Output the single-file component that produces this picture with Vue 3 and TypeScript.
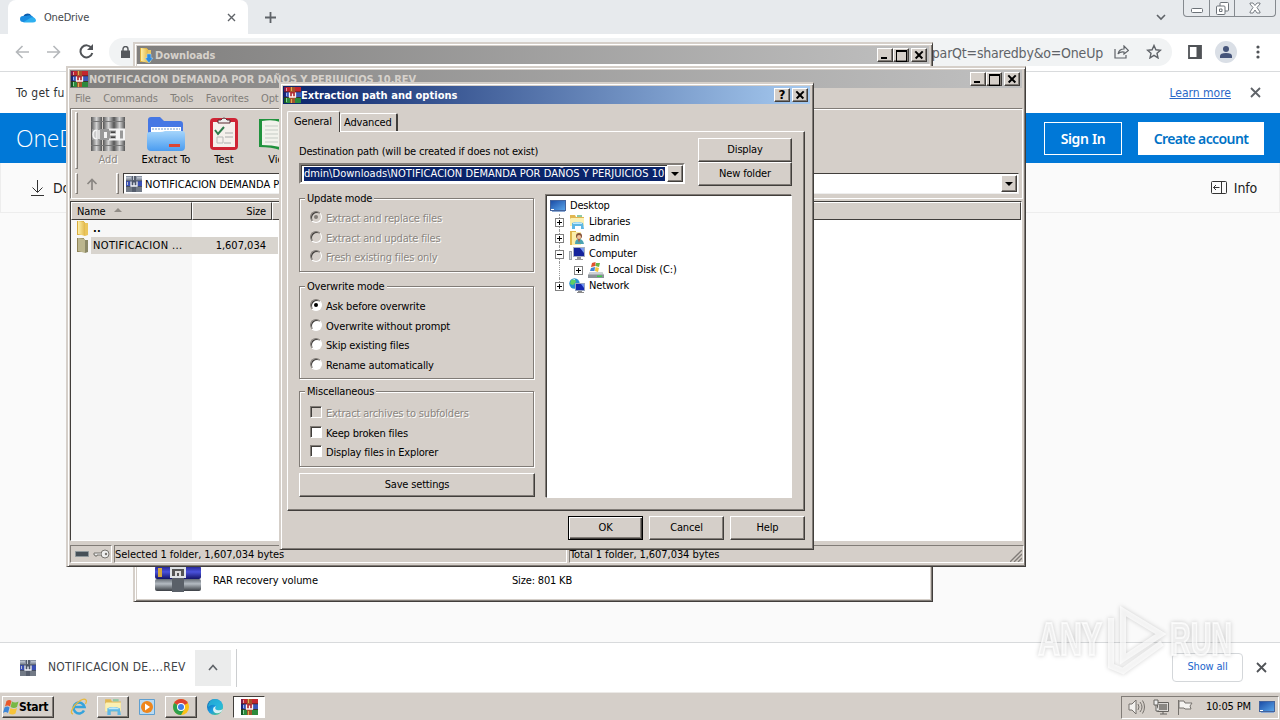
<template>
  <div class="screen">
    <svg class="defs" width="0" height="0">
      <defs>
        <linearGradient id="folder-y" x1="0" x2="1"><stop offset="0" stop-color="#fdf0a8" /><stop offset="1" stop-color="#e2b74a" /></linearGradient>
        <linearGradient id="folder-b" x1="0" y1="0" x2="0" y2="1"><stop offset="0" stop-color="#a5d5fb" /><stop offset="1" stop-color="#4a9cf0" /></linearGradient>
        <linearGradient id="monitor" x1="0" y1="0" x2="1" y2="1"><stop offset="0" stop-color="#1c4fa8" /><stop offset="1" stop-color="#58a3e8" /></linearGradient>
        <linearGradient id="edge" x1="0" y1="0" x2="1" y2="1"><stop offset="0" stop-color="#0c59a4" /><stop offset=".5" stop-color="#1b9de2" /><stop offset="1" stop-color="#58d36b" /></linearGradient>
        <linearGradient id="pipe" x1="0" x2="1"><stop offset="0" stop-color="#555" /><stop offset=".5" stop-color="#d2d2d2" /><stop offset="1" stop-color="#555" /></linearGradient>
        <linearGradient id="roll-blue" x1="0" y1="0" x2="0" y2="1"><stop offset="0" stop-color="#22228c" /><stop offset=".45" stop-color="#4a52dc" /><stop offset="1" stop-color="#141466" /></linearGradient>
        <linearGradient id="roll-gray" x1="0" y1="0" x2="0" y2="1"><stop offset="0" stop-color="#666d75" /><stop offset=".4" stop-color="#b4bbc2" /><stop offset="1" stop-color="#3a3e44" /></linearGradient>
      </defs>
      <symbol id="i-rar" viewBox="0 0 17 16" preserveAspectRatio="none">
        <path fill="#c4262e" d="M0 0h17v5H0z" /><path fill="#3a56b8" d="M0 5h17v5H0z" /><path fill="#2c8a3c" d="M0 10h17v6H0z" />
        <path fill="#7c1a4c" d="M0 0h2v5H0z" /><path fill="#18247c" d="M0 5h2v5H0z" /><path fill="#145424" d="M0 10h2v6H0z" />
        <path fill="#e4a0a0" d="M2 1h1v3H2z" /><path fill="#9cb4ee" d="M2 6h1v3H2z" /><path fill="#8cd49a" d="M2 11h1v4H2z" />
        <path fill="#3a2020" d="M0 4.500h17v.8H0zM0 10h17v.8H0z" />
        <path fill="#a5532c" d="M6 0h5v16H6z" /><path fill="#e0b050" d="M7 0h1v4H7zM7 12h1v4H7z" />
        <path fill="#b02a34" d="M5 5h7v6H5z" /><path fill="none" stroke="#fbf4f0" stroke-width="1.300" d="M5.500 5.500V10h6V5.500M8.500 6.500V10" />
      </symbol>
      <symbol id="i-rev" viewBox="0 0 16 16">
        <path fill="#8a93a3" d="M0 0h16v5H0z" /><path fill="#3b50b4" d="M0 5h16v5H0z" /><path fill="#727a86" d="M0 10h16v6H0z" />
        <path fill="#3b4254" d="M0 4.500h16v.8H0zM0 10h16v.8H0z" /><path fill="#b8c0cc" d="M0 1h5v1.500H0zM11 1h5v1.500h-5zM1 6h1v3H1z" />
        <path fill="#555d6c" d="M6 0h4v16H6z" /><path fill="#c6ccd6" d="M7 0h1v4H7z" />
        <path fill="#4a5468" d="M4.500 5h7v6h-7z" /><path fill="none" stroke="#f3f5fa" stroke-width="1.300" d="M5 5.500V10h6V5.500M8 6.500V10" />
      </symbol>
      <symbol id="i-folder" viewBox="0 0 16 16">
        <path fill="#d8ac3e" d="M2 1h7v14H2z" /><path fill="url(#folder-y)" d="M3 1l7 1v14l-7-2z" /><path fill="#ebc65c" d="M10 3h3v12l-3 1z" />
      </symbol>
      <symbol id="i-folder-sel" viewBox="0 0 16 16">
        <path fill="#8f8356" d="M2 1h7v14H2z" /><path fill="#bcb68e" d="M3 1l7 1v14l-7-2z" /><path fill="#8c8968" d="M10 3h3v12l-3 1z" />
      </symbol>
      <symbol id="i-explorer" viewBox="0 0 16 16">
        <path fill="#e1b751" d="M1 1h5l1 2h8v9H1z" /><path fill="#fbf0b3" d="M2 4h13v8H1V5z" /><path fill="#8fc9a4" d="M8 1h5v2H8z" />
        <path fill="#5fb7e4" d="M3 9q5-2 11 0l1 6h-3v-3H6v3H3z" /><path fill="#c0e9fa" d="M4 9q4-1.500 9 0v1H4z" />
      </symbol>
      <symbol id="i-desktop" viewBox="0 0 16 16">
        <path fill="#43639c" d="M0 2h16v11H0z" /><path fill="url(#monitor)" d="M1 3h14v9H1z" /><path fill="#fff" d="M1 11h3v1H1z" /><path fill="#8ba9d4" d="M2 13h13v1H2z" />
      </symbol>
      <symbol id="i-user" viewBox="0 0 16 16">
        <path fill="#dfb54c" d="M1 1h6v14H1z" /><path fill="#fbedaa" d="M3 2h9v13H3z" /><circle cx="10" cy="6" r="3" fill="#855239" /><circle cx="10" cy="7" r="2" fill="#efc29b" />
        <path fill="#4ba3b2" d="M6 14q0-5 4-5t5 5z" /><path fill="#bd533a" d="M9 9h2l-1 4z" />
      </symbol>
      <symbol id="i-computer" viewBox="0 0 16 16">
        <path fill="#9ea5aa" d="M0 5h3v9H0z" /><path fill="#d7dde1" d="M1 6h1v7H1z" /><path fill="#a9b1c2" d="M4 1h12v10H4z" /><path fill="#15249c" d="M5 2h10v8H5z" />
        <path fill="#7b9df0" d="M11 2h4v5z" /><path fill="#9a9a9a" d="M8 11h4v2h2v1H6v-1h2z" />
      </symbol>
      <symbol id="i-disk" viewBox="0 0 16 16">
        <path fill="#8c9298" d="M2 10h12l2 3v3H0v-3z" /><path fill="#cdd2d6" d="M2 10h12l1.500 2.500H.5z" /><path fill="#3ecb4c" d="M9 13.500h5V15H9z" />
        <path fill="#e2512d" d="M4 1l3.500-1v4L3 5z" /><path fill="#69b546" d="M8 1l4 0-1 4-3.500-1z" /><path fill="#4284d3" d="M3 6l4-1-.5 4L2 9z" /><path fill="#f5c53b" d="M7.500 5l3.500 1-1 4-3-1z" />
      </symbol>
      <symbol id="i-network" viewBox="0 0 16 16">
        <circle cx="5.500" cy="5.500" r="5.200" fill="#268fd0" /><path fill="#5fce64" d="M2 2l4-1 1 3-3 3-3-1zM6 7l3 1-2 3z" /><path fill="#c7ecff" d="M3 2l3-1v1z" />
        <path fill="#97a3c0" d="M6 5h10v8H6z" /><path fill="#1426b0" d="M7 6h8v6H7z" /><path fill="#6e92f2" d="M12 6h3v4z" /><path fill="#8b8b8b" d="M9 13h4v1h2v1H8v-1h1z" />
      </symbol>
      <symbol id="i-flag" viewBox="0 0 16 16">
        <path fill="#e8582b" d="M3.500 2q3-2 5 0L7 7.500Q4.500 5.500 2 7.500z" /><path fill="#78b845" d="M9 2.500q3 2 6.500 0l-1.500 5.500q-3 2-6.500 0z" />
        <path fill="#3d87d8" d="M1.500 8.500q3-2 5 0L5 14q-2.500-2-5 0z" /><path fill="#f6c33a" d="M7.500 9q3 2 6.500 0l-1.500 5.500q-3 2-6.500 0z" />
      </symbol>
    </svg>

    <!-- Browser -->
    <div class="tabstrip">
      <div class="tab">
        <svg class="cloud" width="16" height="11" viewBox="0 0 16 11"><path fill="#0b5cad" d="M3 6a4.500 4.500 0 0 1 8.500-2L9 8H3z" /><path fill="#1a8ce0" d="M6 4q6-2 8 2l-4 4H3a3 3 0 0 1 0-6z" /><path fill="#2eb0f0" d="M3 10.500L11 5.500q4-1 5 2.500 0 2.500-3 2.500z" /></svg>
        <span>OneDrive</span>
        <svg class="tab-x" width="9" height="9" viewBox="0 0 9 9"><path d="M1 1l7 7M8 1L1 8" stroke="#5f6368" stroke-width="1.400" /></svg>
      </div>
      <svg class="new-tab" width="13" height="13" viewBox="0 0 13 13"><path d="M6.500 1v11M1 6.500h11" stroke="#5f6368" stroke-width="1.800" /></svg>
      <svg class="chev" width="10" height="7" viewBox="0 0 10 7"><path d="M1 1l4 4 4-4" fill="none" stroke="#5f6368" stroke-width="1.600" /></svg>
      <div class="caption">
        <span><svg width="12" height="5" viewBox="0 0 12 5"><rect x=".5" y=".5" width="11" height="4" rx="1" fill="#fff" stroke="#6c7278" /></svg></span>
        <span><svg width="13" height="13" viewBox="0 0 13 13" fill="#fff" stroke="#6c7278"><rect x="4" y=".5" width="8.500" height="8.500" rx="1" /><rect x=".5" y="4" width="8.500" height="8.500" rx="1" /><path d="M3.500 7h2.500v2.500H3.500z" /></svg></span>
        <span><svg width="12" height="12" viewBox="0 0 12 12"><path d="M1 1h3l2 2.500L8 1h3v1L8 5.500 11 10v1H8L6 8l-2 3H1v-1l3-4.500L1 2z" fill="#fff" stroke="#6c7278" stroke-width=".9" /></svg></span>
      </div>
    </div>
    <div class="toolbar">
      <svg width="14" height="14" viewBox="0 0 14 14"><path d="M7.500 1L1.500 7l6 6M1.500 7H14" fill="none" stroke="#b5b8bb" stroke-width="1.600" /></svg>
      <svg width="14" height="14" viewBox="0 0 14 14"><path d="M6.500 1l6 6-6 6M12.500 7H0" fill="none" stroke="#b5b8bb" stroke-width="1.600" /></svg>
      <svg width="15" height="15" viewBox="0 0 15 15"><path d="M12.500 4A6 6 0 1 0 13.300 9" fill="none" stroke="#505357" stroke-width="2" /><path d="M14 0v6H8z" fill="#505357" /></svg>
      <div class="omnibox">
        <svg width="9" height="12" viewBox="0 0 9 12"><path d="M0 4.500h9V12H0z" fill="#55585c" /><path d="M2 5V3a2.500 2.500 0 0 1 5 0v2" fill="none" stroke="#55585c" stroke-width="1.400" /></svg>
        <span class="url">parQt=sharedby&amp;o=OneUp</span>
        <svg width="15" height="14" viewBox="0 0 15 14" fill="none" stroke="#5f6368" stroke-width="1.200"><path d="M1 4v9h11v-3" /><path d="M4 9q1-5 6-5V1l4.500 4.500L10 9V7Q6 6.500 4 9z" /></svg>
        <svg width="16" height="15" viewBox="0 0 16 15"><path d="M8 1.500l1.900 4.300 4.600.4-3.500 3.100 1 4.600L8 11.400l-4 2.500 1-4.600L1.500 6.200l4.600-.4z" fill="none" stroke="#5f6368" stroke-width="1.400" /></svg>
      </div>
      <svg width="14" height="14" viewBox="0 0 14 14"><path d="M1 1h12v12H1z" fill="none" stroke="#505357" stroke-width="1.800" /><path d="M8.500 1H13v12H8.500z" fill="#505357" /></svg>
      <div class="avatar"><svg width="12" height="12" viewBox="0 0 12 12"><circle cx="6" cy="3" r="3" fill="#46557a" /><path d="M0 12V10q0-3 6-3t6 3v2z" fill="#46557a" /></svg></div>
      <svg width="4" height="14" viewBox="0 0 4 14" fill="#505357"><circle cx="2" cy="2" r="1.600" /><circle cx="2" cy="7" r="1.600" /><circle cx="2" cy="12" r="1.600" /></svg>
    </div>
    <div class="infobar">
      <span class="info-text">To get fu</span>
      <a>Learn more</a>
      <svg width="11" height="11" viewBox="0 0 11 11"><path d="M1 1l9 9M10 1l-9 9" stroke="#5f6368" stroke-width="1.800" /></svg>
    </div>
    <header class="od-header">
      <span class="od-logo">OneDrive</span>
      <span class="od-signin">Sign In</span>
      <span class="od-create">Create account</span>
    </header>
    <div class="od-commands">
      <svg width="13" height="16" viewBox="0 0 13 16"><path d="M6.500 0v12M1.500 7.500l5 5 5-5M0 15.500h13" fill="none" stroke="#333" /></svg>
      <span class="od-dl">Download</span>
      <svg width="16" height="13" viewBox="0 0 16 13"><path d="M.5 1.500q0-1 1-1h13q1 0 1 1v10q0 1-1 1h-13q-1 0-1-1zM10.500.5v12M8.500 6.500h-6M5 4L2.500 6.500 5 9" fill="none" stroke="#333" /></svg>
      <span class="od-info">Info</span>
    </div>
    <div class="od-content"></div>
    <div class="shelf">
      <svg width="16" height="16"><use href="#i-rev" /></svg>
      <span class="shelf-name">NOTIFICACION DE....REV</span>
      <span class="shelf-arrow"><svg width="10" height="7" viewBox="0 0 10 7"><path d="M1 6l4-4.500L9 6" fill="none" stroke="#5f6368" stroke-width="1.600" /></svg></span>
      <span class="shelf-all">Show all</span>
      <svg width="11" height="11" viewBox="0 0 11 11"><path d="M1 1l9 9M10 1l-9 9" stroke="#505357" stroke-width="1.800" /></svg>
    </div>

    <!-- Explorer window -->
    <section class="win explorer">
      <div class="title inactive">
        <svg width="16" height="16"><use href="#i-folder" /><path d="M9 7h4v4h2l-4 5-4-5h2z" fill="#2b8be0" stroke="#b7dcf8" stroke-width=".5" /></svg>
        <span>Downloads</span>
        <i class="cap min"></i><i class="cap max"></i><i class="cap close"></i>
      </div>
      <div class="explorer-body">
        <svg width="46" height="38" viewBox="0 0 46 38">
          <rect width="46" height="12" rx="2" fill="url(#roll-gray)" /><rect y="12" width="46" height="13" rx="2" fill="url(#roll-blue)" /><rect y="25" width="46" height="12" rx="2" fill="url(#roll-gray)" />
          <path d="M3 14h4v9H3z" fill="#d3a83f" /><path d="M17 0h12v38H17z" fill="#5a6068" /><path d="M16 14h14v9H16z" fill="#555" stroke="#e0e4e8" stroke-width="2" /><path d="M20 17h6v5h-2v-3h-2v3h-2z" fill="#ddd" />
        </svg>
        <span class="ex-type">RAR recovery volume</span>
        <span class="ex-size">Size: 801 KB</span>
      </div>
    </section>

    <!-- WinRAR window -->
    <section class="win rar">
      <div class="title inactive">
        <svg width="17" height="16"><use href="#i-rar" /></svg>
        <span>NOTIFICACION DEMANDA POR DAÑOS Y PERJUICIOS 10.REV</span>
        <i class="cap min"></i><i class="cap max"></i><i class="cap close"></i>
      </div>
      <nav class="menu"><span v-for="m in menus" :key="m">{{ m }}</span></nav>
      <div class="rebar">
        <div class="tools">
          <i class="grip"></i>
          <div class="tool disabled">
            <svg width="34" height="34" viewBox="0 0 34 34"><path v-for="x in [0, 12, 23]" :key="x" :d="`M${x} 0h11v34h-11z`" fill="url(#pipe)" /><path d="M0 4h34v1H0zM0 28h34v1H0z" fill="#777" /><path d="M1 12h33v11H1z" fill="#999" /><path d="M6 13q-4 0-4 4.500T6 22zM8 13v9" fill="#ccc" stroke="#f4f4f4" stroke-width="1.500" /><path d="M13 15h3v6h-3z" fill="#f4f4f4" /><path d="M18 12.500h8v10h-8M19 17.500h7M28 12.500h5v10h-5z" fill="none" stroke="#f4f4f4" stroke-width="2" /><path d="M20 14.500h4v1.500h-4zM20 19.500h4V21h-4z" fill="#444" /></svg>
            <span>Add</span>
          </div>
          <div class="tool">
            <svg width="38" height="34" viewBox="0 0 38 34"><path d="M1 3q0-3 3-3h9l4 4h16q3 0 3 3v20H1z" fill="#4577e4" /><path d="M4 10h30v14H4z" fill="#fff" /><path d="M5 12h28" stroke="#b8cde6" stroke-width="2" stroke-dasharray="2 1" /><path d="M0 17q0-2 3-2h10q3 0 5-1h17q3 0 3 3v13q0 4-4 4H4q-4 0-4-4z" fill="url(#folder-b)" /><path d="M22 27h11v3H22z" fill="#dc4635" /></svg>
            <span>Extract To</span>
          </div>
          <div class="tool">
            <svg width="28" height="34" viewBox="0 0 28 34"><rect y="1" width="28" height="32" rx="4" fill="#cf2435" /><path d="M3 5h22v25H3z" fill="#f5f0ec" /><path d="M8 6V3h3q3-4 6 0h3v3z" fill="#eee" stroke="#5c2b30" /><path d="M5 13l3 4 6-7" fill="none" stroke="#2e7b4a" stroke-width="2" /><path d="M15 16h8M15 20h8M14 26h7" stroke="#aaa" /><path d="M7 20h6v6H7z" fill="none" stroke="#b9b9b9" /></svg>
            <span>Test</span>
          </div>
          <div class="tool view">
            <svg width="42" height="34" viewBox="0 0 42 34"><path d="M0 2h42v28q-12 2-21 3-8-3-21-3z" fill="#20923d" /><path d="M3 4q11-2 18 1v25q-8-2-18-2z" fill="#f2f2ec" /><path d="M21 5q7-3 18-1v24q-10 0-18 2z" fill="#fff" /><path d="M6 9h13M6 13h13M6 17h13M6 21h13M6 25h13" stroke="#c5cbc5" /></svg>
            <span>View</span>
          </div>
        </div>
        <div class="address">
          <i class="grip"></i>
          <svg class="up" width="12" height="12" viewBox="0 0 12 12"><path d="M6 12V2M1.500 6L6 1.500 10.500 6" fill="none" stroke="#8a8682" stroke-width="1.700" /></svg>
          <i class="grip"></i>
          <div class="addr-field">
            <svg width="16" height="16"><use href="#i-rev" /></svg>
            <span>NOTIFICACION DEMANDA POR DAÑOS</span>
            <i class="drop"></i>
          </div>
        </div>
      </div>
      <div class="list">
        <div class="list-head"><span class="h-name">Name <i class="sort"></i></span><span class="h-size">Size</span><span class="h-rest"></span></div>
        <div class="list-body">
          <div class="row"><svg width="16" height="16"><use href="#i-folder" /></svg><span class="c-name dots">..</span></div>
          <div class="row"><svg width="16" height="16"><use href="#i-folder-sel" /></svg><span class="c-name sel">NOTIFICACION ...</span><span class="c-size sel">1,607,034</span></div>
        </div>
      </div>
      <footer class="status">
        <span class="s-icons">
          <svg width="14" height="6" viewBox="0 0 14 6"><path d="M.5.5h13v5H.5z" fill="#465058" stroke="#8f989c" /></svg>
          <svg width="17" height="10" viewBox="0 0 17 10"><circle cx="12" cy="5" r="4" fill="#eee" stroke="#77746f" /><circle cx="13" cy="5" r="1.200" fill="#77746f" /><path d="M8 4H1v2h1v1h2V6h4" fill="#eee" stroke="#77746f" /></svg>
        </span>
        <span class="s-left">Selected 1 folder, 1,607,034 bytes</span>
        <span class="s-right">Total 1 folder, 1,607,034 bytes</span>
        <svg class="size-grip" width="12" height="12" viewBox="0 0 12 12"><path d="M0 12L12 0M4 12l8-8M8 12l4-4" stroke="#807c78" stroke-width="1.300" /></svg>
      </footer>
    </section>

    <!-- Extraction dialog -->
    <section class="win dialog">
      <div class="title active">
        <svg width="17" height="16"><use href="#i-rar" /></svg>
        <span>Extraction path and options</span>
        <i class="cap help">?</i><i class="cap close"></i>
      </div>
      <div class="tabs"><span class="t-on">General</span><span class="t-off">Advanced</span></div>
      <div class="panel">
        <div class="top-row">
          <div class="dest">
            <label>Destination path (will be created if does not exist)</label>
            <div class="combo"><span>dmin\Downloads\NOTIFICACION DEMANDA POR DAÑOS Y PERJUICIOS 10</span><i class="drop"></i></div>
          </div>
          <div class="side"><button>Display</button><button>New folder</button></div>
        </div>
        <div class="main-row">
          <div class="groups">
            <fieldset v-for="g in groups" :key="g.title" :class="g.kind">
              <legend>{{ g.title }}</legend>
              <div v-for="o in g.options" :key="o.label" class="opt" :class="{ off: o.disabled }">
                <i class="mark" :class="{ on: o.checked }"></i><span>{{ o.label }}</span>
              </div>
            </fieldset>
            <button class="save">Save settings</button>
          </div>
          <div class="tree">
            <div v-for="n in nodes" :key="n.label" class="node" :class="'lv' + n.level">
              <i v-if="n.sign" class="box" :class="{ plus: n.sign === '+' }"></i>
              <svg width="16" height="16"><use :href="'#i-' + n.icon" /></svg>
              <span>{{ n.label }}</span>
            </div>
          </div>
        </div>
      </div>
      <div class="actions"><button class="default">OK</button><button>Cancel</button><button>Help</button></div>
    </section>

    <!-- Taskbar -->
    <div class="taskbar">
      <div class="start"><svg width="16" height="16"><use href="#i-flag" /></svg><b>Start</b></div>
      <span class="task"><svg width="18" height="18" viewBox="0 0 18 18"><path d="M14 12.500A5.500 5.500 0 1 1 14.500 9H5" fill="none" stroke="#35a3dc" stroke-width="2.600" /><path d="M3 16Q-1 15 5 7 13-1 16 2q1 1-.5 4" fill="none" stroke="#e8b93c" stroke-width="1.300" /></svg></span>
      <span class="task raised"><svg width="18" height="18"><use href="#i-explorer" /></svg></span>
      <span class="task"><svg width="16" height="16" viewBox="0 0 16 16"><path d="M.5.5h15v15H.5z" fill="#b9daf2" stroke="#5e9fd0" /><circle cx="8" cy="8" r="6" fill="#ee861c" /><path d="M6 4.500l5 3.500-5 3.500z" fill="#fff" /></svg></span>
      <span class="task raised"><svg width="16" height="16" viewBox="0 0 16 16"><circle cx="8" cy="8" r="8" fill="#fbc116" /><path d="M8 8L1.100 4A8 8 0 0 1 14.900 4z" fill="#dd4132" /><path d="M1.100 4A8 8 0 0 0 8 16l3.500-6L8 8z" fill="#2da04d" /><circle cx="8" cy="8" r="4" fill="#fff" /><circle cx="8" cy="8" r="3" fill="#3f7de8" /></svg></span>
      <span class="task"><svg width="16" height="16" viewBox="0 0 16 16"><circle cx="8" cy="8" r="8" fill="url(#edge)" /><path d="M16 9q-2 3-6 2-3-1-1-4-3-3-8 1Q2 0 8 0q7 1 8 7z" fill="#2bbcdc" opacity=".75" /><path d="M9 7q-2 3 1 4 3 1 6-1-1 3-4 4-6 1-6-4 0-2 3-3z" fill="#d8f1f6" /></svg></span>
      <span class="task pressed"><svg width="17" height="16"><use href="#i-rar" /></svg></span>
      <div class="tray">
        <svg width="17" height="16" viewBox="0 0 17 16" fill="#f3f1ee" stroke="#75716c"><path d="M1 5h3l4-4v14l-4-4H1z" /><path d="M10 5q2 3 0 6M12 3q4 5 0 10M14.500 1.500q4 6.500 0 13" fill="none" /></svg>
        <svg width="16" height="16" viewBox="0 0 16 16"><path d="M5 4h10v8H5z" fill="#8a8783" stroke="#f3f1ee" stroke-width="1.500" /><path d="M4.500 3.500h11v9h-11zM7 15h7M10 12v3" fill="none" stroke="#65625e" /><path d="M1 1h4v5H1zM3 6v6h3" fill="#eee" stroke="#65625e" /></svg>
        <svg width="16" height="16" viewBox="0 0 16 16"><path d="M1.500 1v15M2 2h5l1 2h7l-2 3 1 3H8L7 9H2z" fill="#f5f3f0" stroke="#77736e" /></svg>
        <span class="clock">10:05 PM</span>
        <svg width="16" height="16"><use href="#i-desktop" /></svg>
      </div>
    </div>

    <!-- Watermark -->
    <svg class="mark" width="210" height="72" viewBox="0 0 210 72">
      <g class="wm">
        <text x="6" y="51" textLength="64" lengthAdjust="spacingAndGlyphs">ANY</text>
        <text x="138" y="51" textLength="62" lengthAdjust="spacingAndGlyphs">RUN</text>
        <path d="M91 7l38 23-38 25V7zM79 14v48l12 5 39-28" />
      </g>
    </svg>
  </div>
</template>

<script setup lang="ts">
interface Option {
  label: string
  checked?: boolean
  disabled?: boolean
}

interface Group {
  title: string
  kind: string
  options: Option[]
}

interface TreeNode {
  label: string
  icon: string
  level: number
  sign?: '+' | '-'
}

const menus = ['File', 'Commands', 'Tools', 'Favorites', 'Options']

const groups: Group[] = [
  {
    title: 'Update mode',
    kind: 'radio g-update',
    options: [
      { label: 'Extract and replace files', checked: true, disabled: true },
      { label: 'Extract and update files', disabled: true },
      { label: 'Fresh existing files only', disabled: true }
    ]
  },
  {
    title: 'Overwrite mode',
    kind: 'radio g-over',
    options: [
      { label: 'Ask before overwrite', checked: true },
      { label: 'Overwrite without prompt' },
      { label: 'Skip existing files' },
      { label: 'Rename automatically' }
    ]
  },
  {
    title: 'Miscellaneous',
    kind: 'check g-misc',
    options: [
      { label: 'Extract archives to subfolders', disabled: true },
      { label: 'Keep broken files' },
      { label: 'Display files in Explorer' }
    ]
  }
]

const nodes: TreeNode[] = [
  { label: 'Desktop', icon: 'desktop', level: 0 },
  { label: 'Libraries', icon: 'explorer', level: 1, sign: '+' },
  { label: 'admin', icon: 'user', level: 1, sign: '+' },
  { label: 'Computer', icon: 'computer', level: 1, sign: '-' },
  { label: 'Local Disk (C:)', icon: 'disk', level: 2, sign: '+' },
  { label: 'Network', icon: 'network', level: 1, sign: '+' }
]
</script>

<style>
body {
  margin: 0;
  overflow: hidden;
}
</style>

<style scoped>
.screen {
  --face: #d5cfc9;
  --shade: #817c77;
  --dark: #413e3b;
  position: relative;
  display: flex;
  flex-direction: column;
  width: 1280px;
  height: 720px;
  overflow: hidden;
  background: #fafafa;
  font: 11px/14px "DejaVu Sans Condensed", "DejaVu Sans", sans-serif;
  font-stretch: condensed;
  letter-spacing: -0.17px;
  color: #000;
  white-space: nowrap;
}
.screen * {
  box-sizing: border-box;
}
.screen svg {
  flex: none;
  display: block;
}
.defs {
  position: absolute;
}

/* browser chrome */
.tabstrip {
  display: flex;
  height: 34px;
  padding-left: 8px;
  background: #e7eaed;
}
.tab {
  display: flex;
  align-items: center;
  width: 240px;
  padding: 0 12px;
  border-radius: 8px 8px 0 0;
  background: #fff;
  color: #45484c;
}
.tab span {
  margin: 1px 0 0 8px;
}
.tab-x {
  margin-left: auto;
}
.new-tab {
  margin: 11px 0 0 16px;
}
.chev {
  margin: 14px 17px 0 auto;
}
.caption {
  display: flex;
  width: 93px;
  height: 17px;
  margin-right: 4px;
  border: 1px solid #858a8f;
  border-top: 0;
  border-radius: 0 0 4px 4px;
}
.caption span {
  display: flex;
  align-items: center;
  justify-content: center;
  width: 25px;
}
.caption span:first-child {
  padding-top: 4px;
}
.caption span + span {
  border-left: 1px solid #858a8f;
}
.caption span:last-child {
  flex: 1;
}
.toolbar {
  display: flex;
  align-items: center;
  height: 38px;
  padding: 0 20px 2px 15px;
  border-bottom: 1px solid #d9dbdd;
  background: #fff;
}
.toolbar > svg:nth-child(2) {
  margin: 0 18px;
}
.omnibox {
  display: flex;
  flex: none;
  align-items: center;
  width: 1063px;
  height: 28px;
  margin: 0 16px 0 15px;
  padding: 0 10px 0 12px;
  border-radius: 14px;
  background: #f1f3f4;
}
.url {
  margin: 2px 11px 0 auto;
  color: #5f6368;
  font-size: 14px;
  letter-spacing: -0.2px;
}
.omnibox svg:last-child {
  margin-left: 17px;
}
.avatar {
  display: flex;
  flex: none;
  align-items: center;
  justify-content: center;
  width: 22px;
  height: 22px;
  margin: 0 19px 0 13px;
  border-radius: 50%;
  background: #dadfe6;
}
.infobar {
  display: flex;
  align-items: center;
  height: 41px;
  padding: 0 19px 0 16px;
  background: #fff;
  color: #303234;
  font-size: 12px;
}
.info-text {
  letter-spacing: 0.25px;
}
.infobar a {
  margin: 0 19px 0 auto;
  color: #2c68c8;
  letter-spacing: 0;
  text-decoration: underline;
}
.od-header {
  display: flex;
  align-items: center;
  height: 50px;
  padding: 0 16px;
  background: #0078d7;
  color: #fff;
  font: 600 14px "Noto Sans", sans-serif;
}
.od-logo {
  font: 300 23px "Open Sans", sans-serif;
}
.od-signin,
.od-create {
  height: 33px;
  border: 1px solid #fff;
  letter-spacing: -0.35px;
  line-height: 31px;
  text-align: center;
}
.od-signin {
  width: 78px;
  margin: 0 16px 0 auto;
}
.od-create {
  width: 126px;
  background: #fff;
  color: #0072c6;
  letter-spacing: -0.6px;
}
.od-commands {
  display: flex;
  align-items: center;
  height: 50px;
  padding: 0 22px 0 30px;
  border: 1px solid #ededed;
  border-top: 0;
  background: #fafafa;
  color: #222;
  font-size: 14px;
}
.od-dl {
  margin: 0 auto 0 9px;
}
.od-info {
  margin-left: 7px;
}
.od-content {
  flex: 1;
}
.shelf {
  display: flex;
  align-items: center;
  height: 50px;
  padding: 0 13px 0 20px;
  border-top: 1px solid #d8dadc;
  background: #fff;
  color: #404346;
  font-size: 12px;
}
.shelf-name {
  width: 137px;
  margin: 0 10px 2px 12px;
  letter-spacing: 0.27px;
}
.shelf-arrow {
  display: flex;
  align-items: center;
  justify-content: center;
  position: relative;
  width: 36px;
  height: 36px;
  background: #ebecec;
}
.shelf-arrow::after {
  content: "";
  position: absolute;
  right: -6px;
  width: 1px;
  height: 38px;
  background: #ccced0;
}
.shelf-all {
  width: 71px;
  height: 29px;
  margin: 0 13px 0 auto;
  border: 1px solid #d4d7da;
  border-radius: 4px;
  color: #2166cc;
  font-size: 11px;
  line-height: 26px;
  text-align: center;
}

/* classic windows */
.win {
  position: absolute;
  display: flex;
  flex-direction: column;
  padding: 2px;
  border: 1px solid;
  border-color: var(--face) var(--dark) var(--dark) var(--face);
  border-width: 2px 1px 1px 2px;
  background: var(--face);
  box-shadow: inset 1px 1px #fff, inset -1px -1px var(--shade);
}
.title {
  display: flex;
  flex: none;
  align-items: center;
  height: 18px;
  margin-right: 1px;
  padding: 0 2px 0 1px;
  color: #d6d1cb;
  font-size: 11px;
  font-weight: bold;
  letter-spacing: -0.07px;
}
.title span {
  margin: 1px auto 0 1px;
}
.inactive {
  background: linear-gradient(90deg, #807f7e, #c0c0c0);
}
.active {
  background: linear-gradient(90deg, #0a246a, #a6caf0);
  color: #fff;
  letter-spacing: 0.03px;
}
.active span {
  margin-left: 0;
}
.cap,
.drop,
button,
.start,
.raised {
  border: 1px solid;
  border-color: #fff var(--dark) var(--dark) #fff;
  background: var(--face);
  box-shadow: inset -1px -1px var(--shade);
}
.cap {
  position: relative;
  flex: none;
  width: 16px;
  height: 14px;
  color: #000;
  font: bold 12px/12px "DejaVu Sans", sans-serif;
  text-align: center;
}
.cap.close {
  margin-left: 2px;
}
.cap.min::before {
  content: "";
  position: absolute;
  left: 3px;
  bottom: 2px;
  width: 6px;
  height: 2px;
  background: #000;
}
.cap.max::before {
  content: "";
  position: absolute;
  left: 2px;
  top: 1px;
  width: 9px;
  height: 9px;
  border: 1px solid #000;
  border-top-width: 2px;
}
.cap.close::before,
.cap.close::after {
  content: "";
  position: absolute;
  left: 2px;
  top: 5px;
  width: 10px;
  height: 1.5px;
  background: #000;
  transform: rotate(45deg);
}
.cap.close::after {
  transform: rotate(-45deg);
}
.explorer {
  left: 133px;
  top: 42px;
  width: 800px;
  height: 560px;
}
.explorer-body {
  display: flex;
  flex: 1;
  align-items: flex-end;
  padding: 0 18px 7px;
  background: #fff;
}
.ex-type {
  width: 299px;
  margin: 0 0 4px 12px;
  letter-spacing: -0.07px;
}
.ex-size {
  margin-bottom: 4px;
}

/* WinRAR */
.rar {
  left: 66px;
  top: 66px;
  width: 960px;
  height: 501px;
}
.menu {
  display: flex;
  height: 20px;
  padding: 4px 5px 0;
  gap: 12.5px;
  color: #827e79;
  letter-spacing: -0.2px;
}
.rebar {
  height: 91px;
  border: 1px solid var(--shade);
  border-color: var(--shade) #fff #fff var(--shade);
  box-shadow: inset 1px 1px #fff;
}
.tools {
  display: flex;
  height: 62px;
  padding: 3px 4px 0;
}
.grip {
  flex: none;
  width: 3px;
  border: 1px solid;
  border-color: #fff var(--shade) var(--shade) #fff;
}
.tools .grip {
  height: 57px;
}
.tool {
  display: flex;
  flex-direction: column;
  align-items: center;
  width: 58px;
  padding-top: 5px;
}
.tools .tool:nth-child(2) {
  margin-left: 1px;
}
.tool span {
  margin-top: 2px;
  letter-spacing: 0;
}
.tool.view {
  margin-left: -2px;
}
.tool.disabled {
  color: #8c8782;
  text-shadow: 1px 1px #fff;
}
.address {
  display: flex;
  height: 25px;
  padding: 2px 3px 0 4px;
}
.address .grip {
  height: 21px;
}
.up {
  margin: 5px 18px 0 8px;
}
.addr-field {
  display: flex;
  flex: 1;
  align-items: center;
  height: 21px;
  margin-left: 4px;
  padding: 0 1px 0 2px;
  border: 1px solid;
  border-color: var(--dark) #eee #eee var(--dark);
  background: #fff;
}
.addr-field span {
  margin: 2px auto 0 3px;
  letter-spacing: 0;
}
.drop {
  position: relative;
  flex: none;
  width: 16px;
  height: 17px;
}
.drop::before {
  content: "";
  position: absolute;
  left: 3px;
  top: 6px;
  border: 4px solid transparent;
  border-top-color: #000;
  border-bottom: 0;
}
.list {
  display: flex;
  flex: 1;
  flex-direction: column;
  margin: 2px 1px 0 0;
  border: 1px solid;
  border-color: var(--dark) #fff #fff var(--dark);
}
.list-head {
  display: flex;
  height: 18px;
}
.list-head span {
  padding: 2px 6px 0;
  border: 1px solid;
  border-color: #fff var(--dark) var(--dark) #fff;
  background: var(--face);
  line-height: 13px;
}
.list-head .h-name {
  width: 121px;
  padding-left: 5px;
}
.sort {
  display: inline-block;
  margin: 0 0 3px 5px;
  border: 4px solid transparent;
  border-top: 0;
  border-bottom-color: #918c86;
}
.list-head .h-size {
  width: 80px;
  padding-right: 5px;
  text-align: right;
}
.h-rest {
  flex: 1;
}
.list-body {
  flex: 1;
  background: linear-gradient(90deg, #f7f7f7 121px, #fff 121px);
}
.row {
  display: flex;
  height: 17px;
  padding-left: 4px;
}
.row span {
  height: 17px;
  line-height: 17px;
}
.c-name {
  width: 101px;
  padding-left: 2px;
  letter-spacing: 0.35px;
}
.dots {
  font-weight: bold;
}
.c-size {
  width: 86px;
  padding-right: 12px;
  letter-spacing: 0;
  text-align: right;
}
.sel {
  background: #d8d4ce;
}
.status {
  display: flex;
  align-items: center;
  height: 20px;
  margin-top: 3px;
  letter-spacing: -0.06px;
}
.status span {
  height: 18px;
  border: 1px solid;
  border-color: var(--shade) #fff #fff var(--shade);
  line-height: 18px;
}
.status .s-icons {
  display: flex;
  align-items: center;
  width: 42px;
  padding-left: 4px;
  gap: 4px;
}
.s-left {
  width: 453px;
  margin-left: 2px;
}
.s-right {
  flex: 1;
  margin-left: 2px;
}
.size-grip {
  margin: 4px 1px 0 -14px;
}

/* dialog */
.dialog {
  left: 279px;
  top: 82px;
  width: 535px;
  height: 468px;
}
.cap.help {
  margin-left: auto;
}
.tabs {
  display: flex;
  align-items: flex-end;
  height: 27px;
  padding-left: 4px;
}
.tabs span {
  border: 1px solid #fff;
  border-right: 2px solid var(--dark);
  border-bottom: 0;
  border-radius: 2px 2px 0 0;
}
.tabs .t-on {
  position: relative;
  z-index: 1;
  width: 53px;
  height: 21px;
  margin-bottom: -1px;
  padding: 3px 0 0 6px;
  border-right-width: 1px;
  background: var(--face);
}
.t-off {
  width: 58px;
  height: 18px;
  padding: 2px 0 0 3px;
}
.panel {
  flex: none;
  width: 518px;
  height: 380px;
  margin-left: 4px;
  padding: 6px 12px 0 11px;
  border: 1px solid;
  border-color: #fff var(--dark) var(--dark) #fff;
  box-shadow: inset -1px -1px var(--shade);
}
.top-row {
  display: flex;
  justify-content: space-between;
}
.dest {
  width: 386px;
}
.dest label {
  display: block;
  height: 25px;
  padding-top: 7px;
}
.combo {
  display: flex;
  align-items: center;
  justify-content: flex-end;
  height: 21px;
  border: 2px solid;
  border-color: var(--shade) #fff #fff var(--shade);
  background: #fff;
  box-shadow: inset 1px 1px var(--dark);
}
.combo span {
  width: 361px;
  height: 14px;
  margin-right: 2px;
  background: #0a246a;
  color: #fff;
  letter-spacing: 0.04px;
  line-height: 13px;
}
.side {
  display: flex;
  flex-direction: column;
  width: 94px;
}
button {
  height: 24px;
  padding: 0;
  font: inherit;
  letter-spacing: inherit;
  color: #000;
}
.main-row {
  display: flex;
  justify-content: space-between;
  margin-top: 10px;
}
.groups {
  width: 235px;
}
fieldset {
  position: relative;
  margin: 0 0 14px;
  padding: 12px 0 0 10px;
  border: 1px solid var(--shade);
  box-shadow: 1px 1px #fff, inset 1px 1px #fff;
}
legend {
  position: absolute;
  left: 5px;
  top: -8px;
  padding: 1px 2px 0;
  background: var(--face);
}
.g-update {
  height: 74px;
  margin-top: 2px;
}
.g-over {
  height: 93px;
  margin-bottom: 12px;
}
.g-misc {
  height: 76px;
  margin-bottom: 6px;
  padding-top: 14px;
}
.opt {
  display: flex;
  height: 19.5px;
}
.opt span {
  margin-left: 4px;
  padding-top: 1px;
}
.mark {
  position: static;
}
.opt .mark {
  position: relative;
  width: 12px;
  height: 12px;
  border: 1px solid;
  border-color: var(--shade) #fff #fff var(--shade);
  background: #fff;
  box-shadow: inset 1px 1px var(--dark);
}
.radio .mark {
  border-radius: 50%;
}
.mark.on::before {
  content: "";
  position: absolute;
  left: 3px;
  top: 3px;
  width: 4px;
  height: 4px;
  border-radius: 50%;
  background: #000;
}
.off {
  color: #8a8580;
  text-shadow: 1px 1px #fff;
}
.off .mark {
  background: var(--face);
}
.off .mark.on::before {
  background: var(--shade);
}
.save {
  width: 236px;
}
.tree {
  width: 246px;
  height: 303px;
  margin-top: -1px;
  padding: 2px 0 0 3px;
  border: 1px solid;
  border-color: var(--dark) #fff #fff var(--dark);
  background: #fff;
  box-shadow: -1px -1px var(--shade);
}
.node {
  position: relative;
  display: flex;
  align-items: center;
  height: 16px;
}
.node span {
  margin-left: 4px;
}
.lv1 {
  padding-left: 5px;
}
.lv2 {
  padding-left: 24px;
}
.lv1::before,
.lv2::before {
  content: "";
  position: absolute;
  left: 9px;
  top: 0;
  height: 16px;
  border-left: 1px dotted #999;
}
.node:last-child::before {
  height: 8px;
}
.box {
  position: relative;
  width: 9px;
  height: 9px;
  margin-right: 5px;
  border: 1px solid #808080;
  background: #fff;
}
.box::before {
  content: "";
  position: absolute;
  left: 1px;
  top: 3px;
  width: 5px;
  height: 1px;
  background: #000;
}
.box.plus::after {
  content: "";
  position: absolute;
  left: 3px;
  top: 1px;
  width: 1px;
  height: 5px;
  background: #000;
}
.actions {
  display: flex;
  justify-content: flex-end;
  gap: 6px;
  padding: 5px 6px 0;
}
.actions button {
  width: 75px;
}
button.default {
  border-color: #000;
  box-shadow: inset 1px 1px #fff, inset -1px -1px var(--dark), inset -2px -2px var(--shade);
}

/* taskbar */
.taskbar {
  display: flex;
  align-items: center;
  height: 28px;
  padding: 1px 1px 0 2px;
  border-top: 1px solid #eceae7;
  background: var(--face);
}
.start {
  display: flex;
  align-items: center;
  width: 52px;
  height: 22px;
  margin-right: 9px;
}
.start b {
  font-size: 12px;
  letter-spacing: -0.35px;
}
.task {
  display: flex;
  align-items: center;
  justify-content: center;
  width: 32px;
  height: 22px;
  margin-right: 2px;
}
.pressed {
  border: 1px solid;
  border-color: var(--dark) #fff #fff var(--dark);
  background: #fff;
}
.tray {
  display: flex;
  align-items: center;
  width: 158px;
  height: 23px;
  margin-left: auto;
  padding-left: 6px;
  gap: 8px;
  border: 1px solid;
  border-color: var(--shade) #fff #fff var(--shade);
}
.clock {
  margin: 0 0 0 5px;
}

.screen > .mark {
  position: absolute;
  left: 1032px;
  top: 604px;
  overflow: visible;
}
.wm {
  fill: rgba(255, 255, 255, 0.6);
  stroke: rgba(255, 255, 255, 0.7);
  stroke-width: 2;
  font: bold 46px "Liberation Sans", sans-serif;
  filter: drop-shadow(0 0 2px rgba(0, 0, 0, 0.25));
}
.wm path {
  fill: none;
  stroke-width: 6;
}
</style>
